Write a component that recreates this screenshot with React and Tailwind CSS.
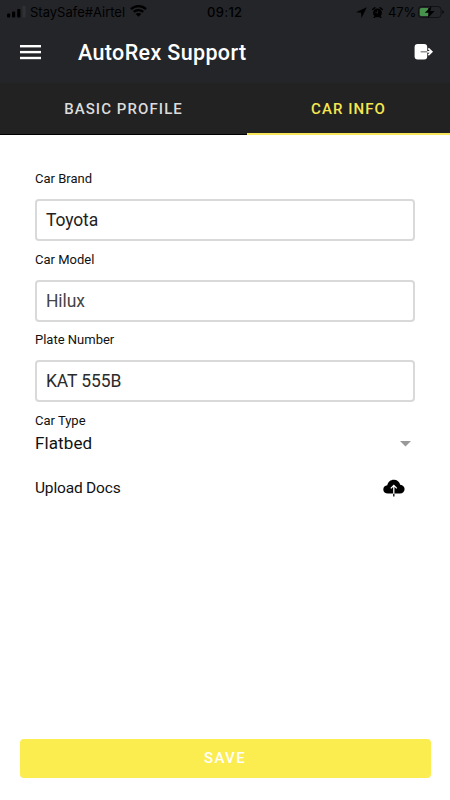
import React from 'react';

const fields = [
    { label: 'Car Brand', value: 'Toyota', color: 'text-[#222222]' },
    { label: 'Car Model', value: 'Hilux', color: 'text-[#444444]' },
    { label: 'Plate Number', value: 'KAT 555B', color: 'text-[#2b2b2b]' },
];

const StatusBar = () => (
    <div className="flex h-6 items-center text-black font-['Inter',sans-serif] text-[13px] leading-6">
        <svg className="ml-[7px] w-[19px] h-3 shrink-0" viewBox="0 0 19 12">
            <rect x="0" y="7.5" width="3.2" height="4" rx="1" />
            <rect x="5" y="5.5" width="3.2" height="6" rx="1" />
            <rect x="10.2" y="3" width="3.2" height="8.5" rx="1" />
            <rect x="15.4" y="0" width="3.2" height="11.5" rx="1" fill="#303135" />
        </svg>
        <span className="ml-1 w-[96px] shrink-0 whitespace-nowrap">StaySafe#Airtel</span>
        <svg className="ml-1 mb-0.5 w-[17px] h-3 shrink-0" viewBox="0 0 17 12">
            <path d="M8.5 0C5.2 0 2.3 1.3.2 3.3l1.5 1.6a9.8 9.8 0 0 1 13.6 0l1.5-1.6A12 12 0 0 0 8.5 0Z" />
            <path d="M8.5 4C6.3 4 4.4 4.8 3 6.1l1.5 1.6a5.9 5.9 0 0 1 8 0L14 6.1A8 8 0 0 0 8.5 4Z" />
            <path d="M8.5 8c-1.1 0-2.1.4-2.8 1l2.8 2.8L11.3 9c-.7-.6-1.7-1-2.8-1Z" />
        </svg>
        <span className="ml-[60px] w-[36px] shrink-0 font-medium tracking-[0.3px] whitespace-nowrap">09:12</span>
        <div className="ml-auto mr-[5px] flex items-center">
            <svg className="w-[11px] h-[11px]" viewBox="0 0 11 11">
                <path d="M10.8.2 0 5.3l5.1.5.4 5.2Z" />
            </svg>
            <svg className="ml-[5px] w-[11px] h-[11px]" viewBox="0 0 11 11">
                <circle cx="5.5" cy="5.8" r="4.4" />
                <path d="M.7 2.5 2.8.7M10.3 2.5 8.2.7M2.2 10.5l1-1M8.8 10.5l-1-1" stroke="black" strokeWidth="1.5" strokeLinecap="round" />
                <path d="M5.5 3.2v2.9l-2.2-.8" fill="none" stroke="#242529" strokeWidth=".8" />
            </svg>
            <span className="ml-[5px] w-[27px] tracking-[-0.1px] whitespace-nowrap">47%</span>
            <svg className="ml-[3px] w-[27px] h-3" viewBox="0 0 27 12">
                <rect x=".5" y=".5" width="22.5" height="11" rx="3" fill="none" stroke="#111214" />
                <path d="M24.5 4v4c1.6-.6 1.6-3.4 0-4Z" />
                <path d="M3.4 2H10v8H3.4A1.6 1.6 0 0 1 1.8 8.4V3.6A1.6 1.6 0 0 1 3.4 2Z" fill="#47934c" />
                <path d="M13.5 0 6.8 6.8h4.3L9.8 12l6.9-7h-4.4Z" />
            </svg>
        </div>
    </div>
);

const Header = () => (
    <header className="h-[83px] bg-[#242529]">
        <StatusBar />
        <div className="flex h-14 items-center px-5">
            <svg className="w-[22px] h-4" viewBox="0 0 22 16" fill="white">
                <rect x="0" y="1" width="21" height="2.4" />
                <rect x="0" y="6.9" width="21" height="2.4" />
                <rect x="0" y="12.8" width="21" height="2.4" />
            </svg>
            <h1 className="ml-9 pt-px text-[21.5px] leading-7 font-medium tracking-[0.36px] text-white">AutoRex Support</h1>
            <svg className="ml-auto -mr-[4px] w-5 h-[18px]" viewBox="0 0 20 18">
                <rect x=".6" y="1" width="12.6" height="15.6" rx="3" fill="white" />
                <path d="M6.6 8.8h6.6" stroke="#777777" strokeWidth="1.2" />
                <path d="M13.2 8.8h4.6M14.3 5.4l3.5 3.4-3.5 3.4" fill="none" stroke="white" strokeWidth="1.7" />
            </svg>
        </div>
    </header>
);

const Tabs = () => (
    <nav className="flex h-[51.5px] bg-[#222222] text-[15px] font-medium">
        <button className="w-[247px] border-b border-black pt-px tracking-[1.08px] text-[#dcdcdc]">BASIC PROFILE</button>
        <button className="flex-1 border-b-2 border-[#f8e65a] pt-0.5 tracking-[1.05px] text-[#f5e751]">CAR INFO</button>
    </nav>
);

const App = () => {
    return (
        <div className="flex h-[800px] w-[450px] flex-col overflow-hidden bg-white font-['Roboto',sans-serif] text-[#111111]">
            <Header />
            <Tabs />

            <main className="flex-1 px-[35px] pt-[36.5px]">
                {fields.map((field) => (
                    <div key={field.label} className="h-[80.5px]">
                        <label className="block h-7 text-[13px] leading-4">{field.label}</label>
                        <div className={`h-[42px] w-[380px] rounded border-2 border-[#d9d9d9] px-[9px] text-[17.5px] leading-[38px] tracking-[-0.12px] ${field.color}`}>
                            {field.value}
                        </div>
                    </div>
                ))}

                <label className="block text-[13px] leading-4">Car Type</label>
                <div className="flex h-7 items-center justify-between pt-0.5 pr-[4px]">
                    <span className="text-[17px] tracking-[0.1px]">Flatbed</span>
                    <svg className="w-[11px] h-[6px]" viewBox="0 0 11 6">
                        <path d="M0 0h11L5.5 5.5Z" fill="#999999" />
                    </svg>
                </div>

                <div className="mt-[17px] flex h-7 items-center justify-between pr-[10px]">
                    <span className="pt-[2px] text-[15.5px] tracking-[-0.18px]">Upload Docs</span>
                    <svg className="w-[22px] h-[18px]" viewBox="0 0 22 18">
                        <path d="M5 14.5C2.2 14.5.3 12.9.3 10.4c0-2.2 1.6-3.9 4-4.1C5 2.8 7.5.7 10.8.7c3.4 0 5.7 2 6.4 5 2.7.3 4.4 2 4.4 4.3 0 2.6-1.9 4.5-4.7 4.5Z" fill="black" />
                        <path d="M10.8 17.5V14.5" stroke="black" strokeWidth="1.3" />
                        <path d="M10.8 14.8V6.5M7.8 9.4l3-3 3 3" fill="none" stroke="white" strokeWidth="1.3" />
                    </svg>
                </div>
            </main>

            <button className="mx-5 mb-[22px] h-[39px] w-[411px] rounded bg-[#fbec4f] pr-px text-[15px] font-medium tracking-[1.4px] text-white">
                SAVE
            </button>
        </div>
    );
};

export default App;
